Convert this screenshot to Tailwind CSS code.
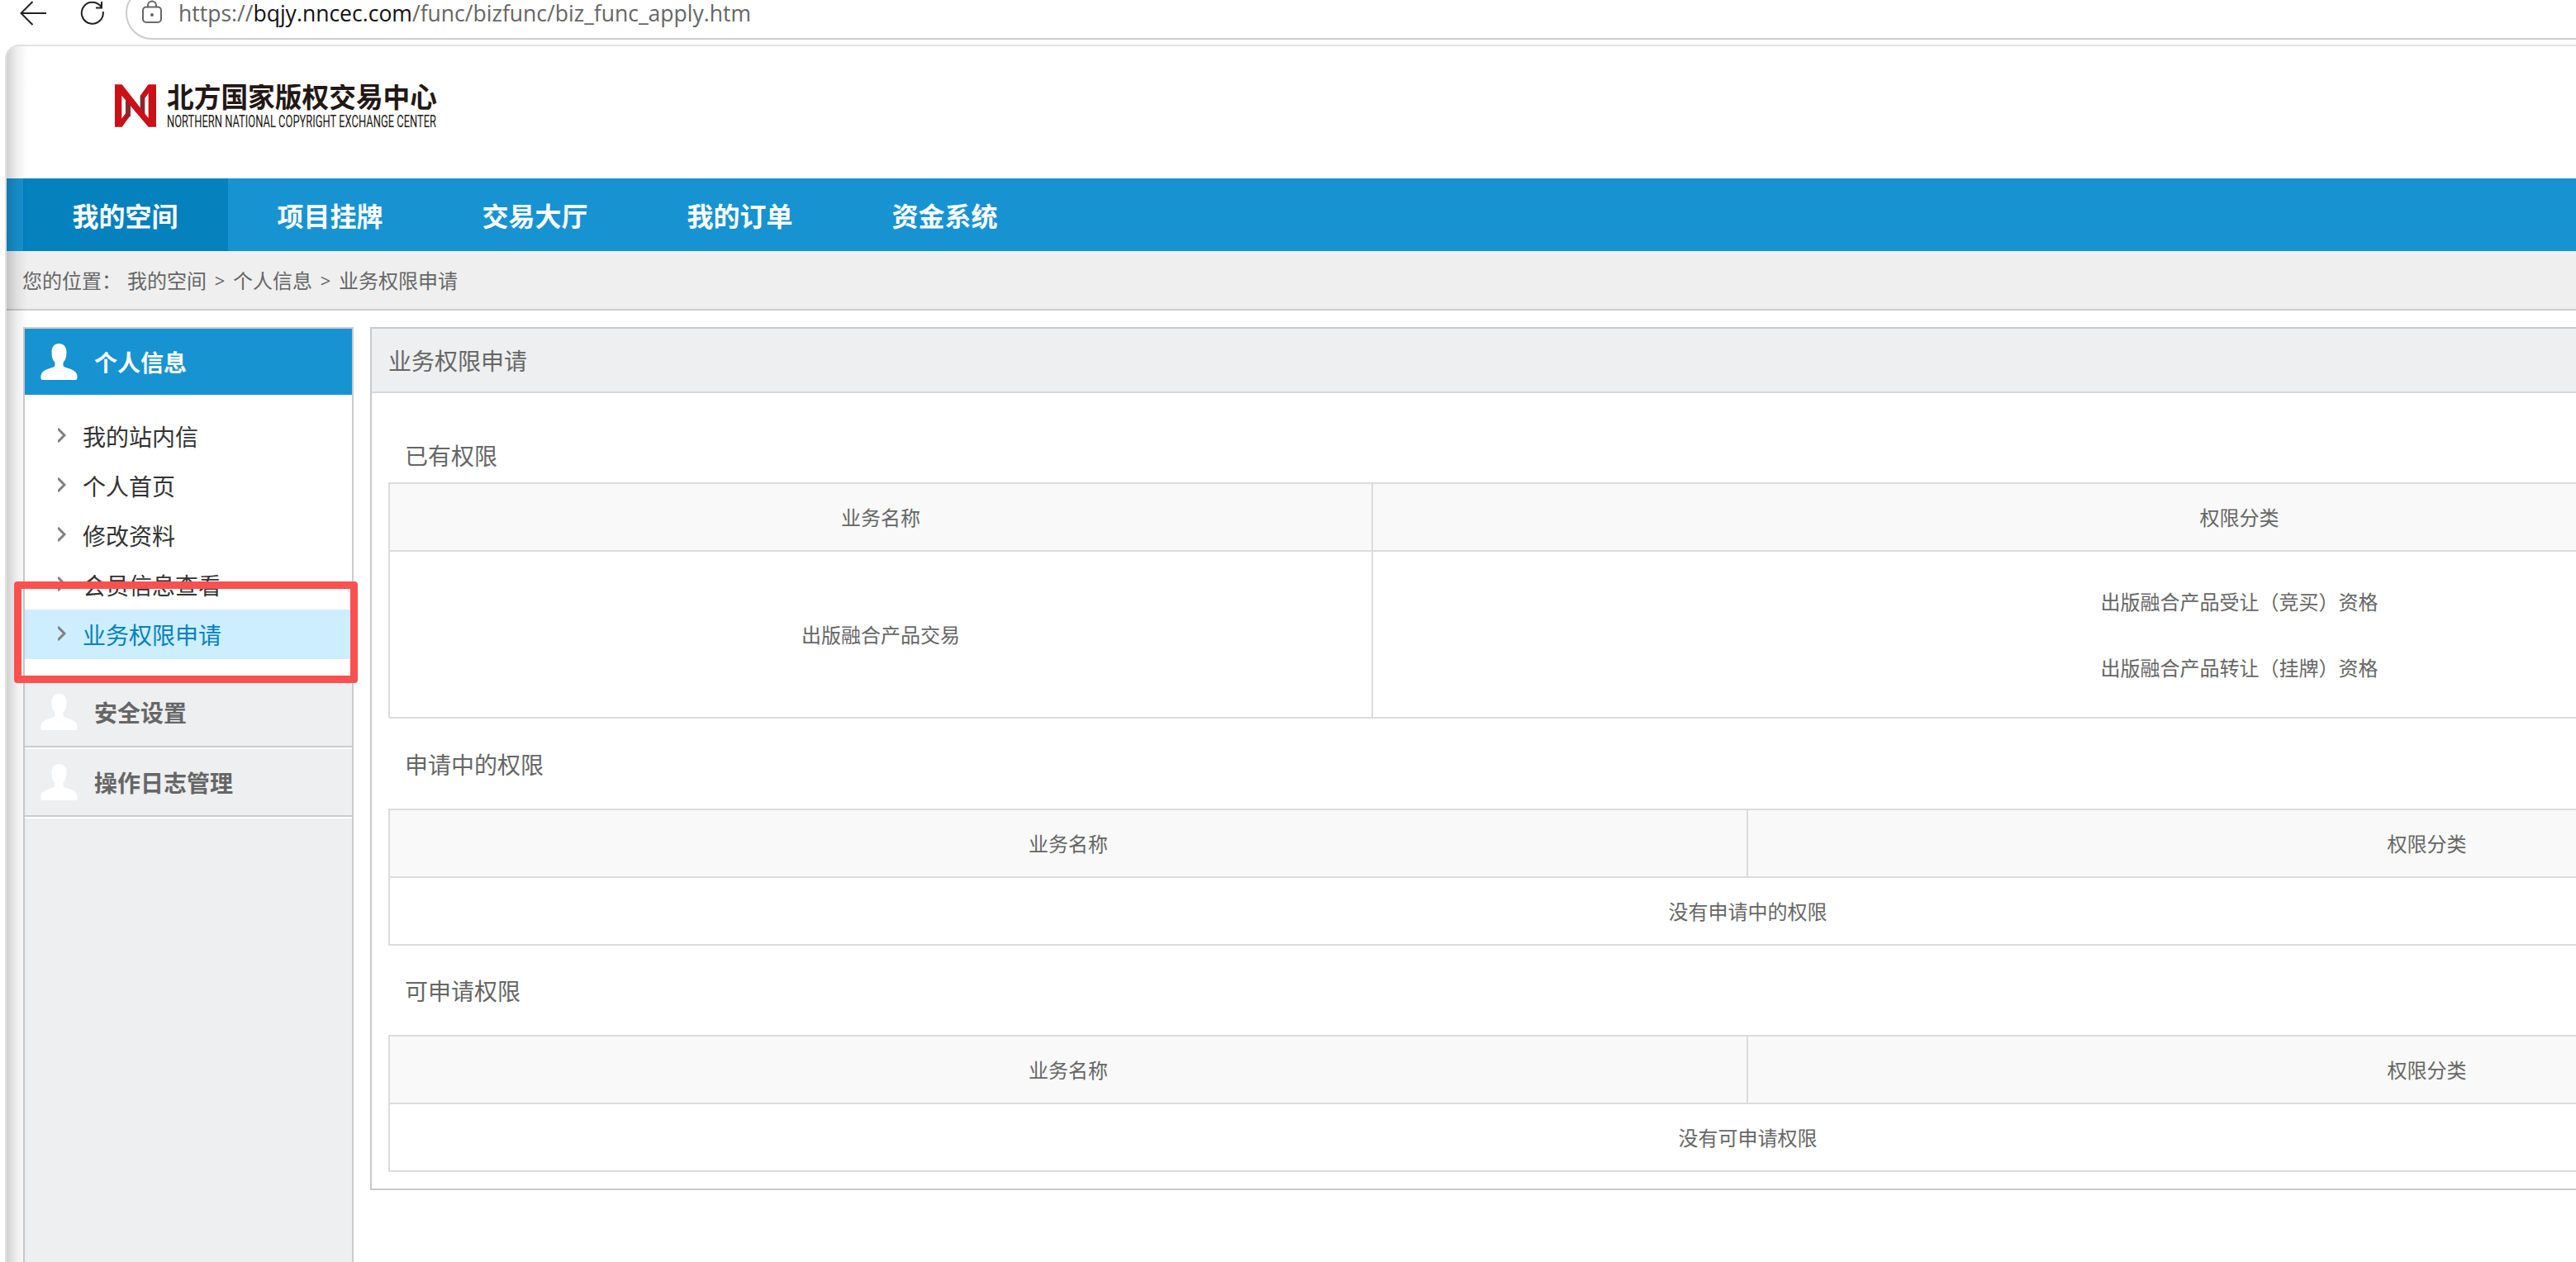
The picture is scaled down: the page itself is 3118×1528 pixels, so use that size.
<!DOCTYPE html>
<html lang="zh-CN">

<head>
  <meta charset="UTF-8">
  <meta name="viewport" content="width=device-width, initial-scale=1.0">
  <title>业务权限申请</title>
  <script src="https://cdn.jsdelivr.net/npm/@tailwindcss/browser@4"></script>
</head>

<body class="relative h-screen overflow-hidden bg-white font-['Noto_Sans_CJK_SC',sans-serif] text-[24px] text-[#666]">

  <!-- Browser toolbar -->
  <div class="flex h-[54px] items-start overflow-hidden pl-6">
    <svg class="mt-[1px] h-[30px] w-8 shrink-0" viewBox="0 0 32 30" fill="none" stroke="#222" stroke-width="2">
      <path d="M15.5 1L1.5 15l14 14M1.5 15H32" />
    </svg>
    <svg class="mt-[1px] ml-[41px] h-[30px] w-[30px] shrink-0" viewBox="0 0 30 30" fill="none" stroke="#222" stroke-width="2">
      <path d="M27.7 13A13 13 0 1 1 24 5.5L26 8" />
      <path d="M26 1v7.5h-7" />
    </svg>
    <div class="-mt-4 ml-[25px] flex h-16 w-[3200px] shrink-0 items-start rounded-l-full border-2 border-[#ccc] pt-[14px] pl-[18px]">
      <svg class="h-7 w-6" viewBox="0 0 24 28" fill="none" stroke="#666" stroke-width="2">
        <rect x="1" y="8.500" width="22" height="18.500" rx="4" />
        <path d="M7 8.500V6.500a5 5 0 0 1 10 0v2" />
        <circle cx="12" cy="18" r="2" fill="#666" stroke="none" />
      </svg>
      <svg class="ml-5 h-[34px] w-[700px] font-['Open_Sans',sans-serif] text-[27px]" fill="#666">
        <text x="0" y="26" textLength="693" lengthAdjust="spacingAndGlyphs">https://<tspan fill="#111">bqjy.nncec.com</tspan>/func/bizfunc/biz_func_apply.htm</text>
      </svg>
    </div>
  </div>

  <!-- Page -->
  <div class="relative ml-[6px] h-[1480px] w-[3900px] overflow-hidden rounded-tl-[17px] border-2 border-[#e2e2e2]">

    <header class="flex h-40 items-start pt-[46px] pl-[131px]">
      <svg class="h-[52px] w-[50px]" viewBox="0 0 150 154">
        <path fill="#862a30" d="M39 50l18 24v40l-18 10zM92 41l17 -6v75l-17 -22z" />
        <path fill="#a81722" d="M25 124l14 -19 18 7 -32 42zM122 0v32l-14 19 -16 -8z" />
        <path fill="#cb1018" d="M0 0h26l96 122V30L108 46 92 41 122 0h28v154h-28L25 40v84l14 -17 0 28L26 154H0z" />
      </svg>
      <svg class="ml-[13px] h-[56px] w-[330px]" fill="#231815">
        <text class="text-[34px] font-bold" x="0" y="28" textLength="327" lengthAdjust="spacingAndGlyphs">北方国家版权交易中心</text>
        <text class="font-[Roboto] text-[20px]" x="0" y="51.500" textLength="326" lengthAdjust="spacingAndGlyphs">NORTHERN NATIONAL COPYRIGHT EXCHANGE CENTER</text>
      </svg>
    </header>

    <nav class="flex h-[88px] items-center bg-[#1793d2] pl-5 text-[32px] font-bold text-white">
      <a class="flex h-full w-[248px] items-center justify-center bg-[#0581bd] pr-[1px]">我的空间</a>
      <a class="w-[248px] pr-[1px] text-center">项目挂牌</a>
      <a class="w-[248px] pr-[1px] text-center">交易大厅</a>
      <a class="w-[248px] pr-[1px] text-center">我的订单</a>
      <a class="w-[248px] pr-[1px] text-center">资金系统</a>
    </nav>

    <div class="flex h-[72px] items-center border-b-2 border-[#ccc] bg-[#efefef] pl-[19px]">
      <span class="w-[127px]">您的位置：</span>
      <span>我的空间</span>
      <span class="w-8 text-center font-['Open_Sans'] text-[22px]">&gt;</span>
      <span>个人信息</span>
      <span class="w-8 text-center font-['Open_Sans'] text-[22px]">&gt;</span>
      <span>业务权限申请</span>
    </div>

    <div class="flex items-start gap-5 pt-5 pl-5">
      <!-- Side menu -->
      <aside class="h-[1200px] w-[400px] shrink-0 border-2 border-[#ccc] bg-[#eeeff1] text-[28px]">
        <h2 class="flex h-20 items-center bg-[#1793d2] pl-[19px] font-bold text-white">
          <svg class="mr-5 h-11 w-[45px]" viewBox="0 0 45 44" fill="currentColor">
            <path d="M22.500 0c5.500 0 9 4 9 10 0 7-1.500 10-4 13v3.500c0 1.500 3 2.500 7 3.800 6.500 2 10 5 10 9.700v2q0 2-2 2h-40q-2 0-2-2v-2c0-4.700 3.500-7.700 10-9.700 4-1.300 7-2.300 7-3.800V23c-2.500-3-4-6-4-13 0-6 3.500-10 9-10z" />
          </svg>
          个人信息
        </h2>
        <ul class="bg-white py-5 text-[#333]">
          <li class="flex h-[60px] items-center pl-10">
            <svg class="mr-5 mb-[3px] h-[18px] w-[10px]" viewBox="0 0 10 18" fill="none" stroke="#808080" stroke-width="3"><path d="M0 1l8 8-8 8" /></svg>
            我的站内信
          </li>
          <li class="flex h-[60px] items-center pl-10">
            <svg class="mr-5 mb-[3px] h-[18px] w-[10px]" viewBox="0 0 10 18" fill="none" stroke="#808080" stroke-width="3"><path d="M0 1l8 8-8 8" /></svg>
            个人首页
          </li>
          <li class="flex h-[60px] items-center pl-10">
            <svg class="mr-5 mb-[3px] h-[18px] w-[10px]" viewBox="0 0 10 18" fill="none" stroke="#808080" stroke-width="3"><path d="M0 1l8 8-8 8" /></svg>
            修改资料
          </li>
          <li class="flex h-[60px] items-center pl-10">
            <svg class="mr-5 mb-[3px] h-[18px] w-[10px]" viewBox="0 0 10 18" fill="none" stroke="#808080" stroke-width="3"><path d="M0 1l8 8-8 8" /></svg>
            会员信息查看
          </li>
          <li class="flex h-[60px] items-center bg-[#cdeeff] pl-10 text-[#0581bd]">
            <svg class="mr-5 mb-[3px] h-[18px] w-[10px]" viewBox="0 0 10 18" fill="none" stroke="#808080" stroke-width="3"><path d="M0 1l8 8-8 8" /></svg>
            业务权限申请
          </li>
        </ul>
        <h2 class="flex h-[87px] items-center border-b-2 border-[#ccc] pt-[3px] pl-[19px] font-bold">
          <svg class="mr-5 h-11 w-[45px] text-white" viewBox="0 0 45 44" fill="currentColor">
            <path d="M22.500 0c5.500 0 9 4 9 10 0 7-1.500 10-4 13v3.500c0 1.500 3 2.500 7 3.800 6.500 2 10 5 10 9.700v2q0 2-2 2h-40q-2 0-2-2v-2c0-4.700 3.500-7.700 10-9.700 4-1.300 7-2.300 7-3.800V23c-2.500-3-4-6-4-13 0-6 3.500-10 9-10z" />
          </svg>
          安全设置
        </h2>
        <h2 class="flex h-[84px] items-center border-t-2 border-b-2 border-t-white border-b-[#ccc] pl-[19px] font-bold">
          <svg class="mr-5 h-11 w-[45px] text-white" viewBox="0 0 45 44" fill="currentColor">
            <path d="M22.500 0c5.500 0 9 4 9 10 0 7-1.500 10-4 13v3.500c0 1.500 3 2.500 7 3.800 6.500 2 10 5 10 9.700v2q0 2-2 2h-40q-2 0-2-2v-2c0-4.700 3.500-7.700 10-9.700 4-1.300 7-2.300 7-3.800V23c-2.500-3-4-6-4-13 0-6 3.500-10 9-10z" />
          </svg>
          操作日志管理
        </h2>
        <div class="h-[2px] bg-white"></div>
      </aside>

      <!-- Content panel -->
      <main class="w-[3335px] shrink-0 border-2 border-[#c8c9ca] pb-5">
        <h1 class="flex h-[78px] items-center border-b-2 border-[#d9d9d9] bg-[#eeeff1] pl-5 text-[28px]">业务权限申请</h1>

        <section class="px-5">
          <h3 class="mt-11 flex h-16 items-center pb-[3px] pl-5 text-[28px]">已有权限</h3>
          <div class="grid grid-cols-[1188px_1fr] gap-[2px] border-2 border-[#dcdcdc] bg-[#dcdcdc] text-center">
            <div class="bg-[#f9f9f9] leading-[80px]">业务名称</div>
            <div class="bg-[#f9f9f9] leading-[80px]">权限分类</div>
            <div class="flex items-center justify-center bg-white">出版融合产品交易</div>
            <div class="bg-white py-5 leading-[80px]">
              <p>出版融合产品受让（竞买）资格</p>
              <p>出版融合产品转让（挂牌）资格</p>
            </div>
          </div>

          <h3 class="flex h-[109px] items-center pl-5 text-[28px]">申请中的权限</h3>
          <div class="grid grid-cols-[1642px_1fr] gap-[2px] border-2 border-[#dcdcdc] bg-[#dcdcdc] text-center leading-[80px]">
            <div class="bg-[#f9f9f9]">业务名称</div>
            <div class="bg-[#f9f9f9]">权限分类</div>
            <div class="col-span-2 bg-white">没有申请中的权限</div>
          </div>

          <h3 class="flex h-[108px] items-center pl-5 text-[28px]">可申请权限</h3>
          <div class="grid grid-cols-[1642px_1fr] gap-[2px] border-2 border-[#dcdcdc] bg-[#dcdcdc] text-center leading-[80px]">
            <div class="bg-[#f9f9f9]">业务名称</div>
            <div class="bg-[#f9f9f9]">权限分类</div>
            <div class="col-span-2 bg-white">没有可申请权限</div>
          </div>
        </section>
      </main>
    </div>

    <!-- Shadow on the window's left edge -->
    <div class="absolute inset-y-0 left-0 w-[26px] bg-linear-to-r from-black/18 via-black/6 to-transparent"></div>
  </div>

  <!-- Highlight frame -->
  <div class="absolute top-[704px] left-[17px] h-[123px] w-[416px] rounded-[4px] border-9 border-[#fb5050]"></div>

</body>

</html>
